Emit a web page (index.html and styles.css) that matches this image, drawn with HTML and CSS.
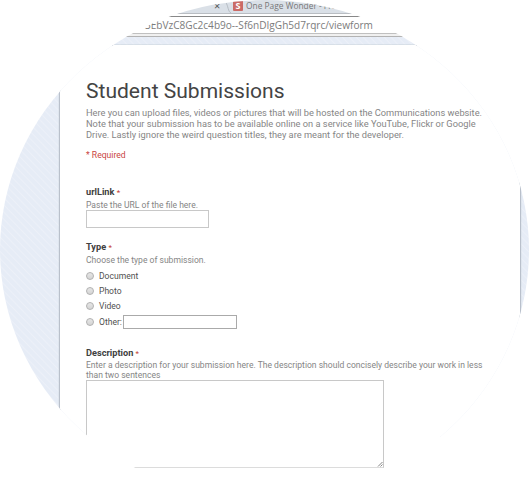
FILE: index.html
```html
<!DOCTYPE html>
<html lang="en">
<head>
<meta charset="utf-8">
<title>Student Submissions</title>
<link rel="stylesheet" href="styles.css">
</head>
<body>
<div class="window">
  <div class="tabs">
    <span class="close">×</span>
    <svg class="edge" width="7" height="13" viewBox="0 0 7 13"><path d="M0 3C2 5 2 12 5 13" fill="none" stroke="#b5bbc2"/></svg>
    <span class="favicon">S</span>
    <span class="tab-title">One Page Wonder - Free</span>
  </div>
  <div class="address"><span class="url">3EbVzC8Gc2c4b9o--Sf6nDIgGh5d7rqrc/viewform</span></div>
  <div class="toolbar-edge"></div>
  <main class="page">
    <form class="card">
      <h1>Student Submissions</h1>
      <p class="intro"><span>Here you can upload files, videos or pictures that will be hosted on the Communications website.</span><span>Note that your submission has to be available online on a service like YouTube, Flickr or Google</span><span>Drive. Lastly ignore the weird question titles, they are meant for the developer.</span></p>
      <p class="required">* Required</p>
      <section class="question url-question">
        <h2>urlLink <b>*</b></h2>
        <p class="help">Paste the URL of the file here.</p>
        <input class="url-input" type="text" aria-label="urlLink">
      </section>
      <section class="question type-question">
        <h2>Type <b>*</b></h2>
        <p class="help">Choose the type of submission.</p>
        <div class="options">
          <label><input type="radio" name="type"><span>Document</span></label>
          <label><input type="radio" name="type"><span>Photo</span></label>
          <label><input type="radio" name="type"><span>Video</span></label>
          <label class="other"><input type="radio" name="type"><span>Other:</span><input class="other-input" type="text" aria-label="Other type"></label>
        </div>
      </section>
      <section class="question description-question">
        <h2>Description <b>*</b></h2>
        <p class="help"><span>Enter a description for your submission here. The description should concisely describe your work in less</span><span>than two sentences</span></p>
        <div class="textarea-box">
          <textarea aria-label="Description"></textarea>
          <svg class="grip" width="6" height="6" viewBox="0 0 6 6"><path d="M1 5.5L5.5 1M3.5 5.5L5.5 3.5" fill="none" stroke="#666" stroke-width=".8"/></svg>
        </div>
      </section>
    </form>
  </main>
</div>
</body>
</html>
```
FILE: styles.css
```css
* { box-sizing: border-box; }
body { margin: 0; background: #fff; }
h1, h2, p { margin: 0; }

.window {
  width: 529px;
  height: 500px;
  display: flex;
  flex-direction: column;
  overflow: hidden;
  clip-path: ellipse(264.5px 250px at 264.5px 250px);
  background: #fff;
  font-family: Roboto, sans-serif;
}

.tabs {
  flex: none;
  height: 14px;
  display: flex;
  padding-left: 214px;
  background: #dae0e7;
  border-bottom: 1px solid #b9bdc2;
  white-space: nowrap;
}
.close { width: 12px; font: 11px/12px "Open Sans", sans-serif; color: #555; }
.edge { flex: none; }
.favicon {
  width: 10px;
  height: 11px;
  border-radius: 1px;
  background: #cb6b66;
  color: #fff;
  font: bold 9px/11px "Open Sans", sans-serif;
  text-align: center;
}
.tab-title { margin-left: 3px; font: 8.4px/11px "Open Sans", sans-serif; color: #777; }

.address {
  flex: none;
  height: 18px;
  margin-top: 2px;
  padding-left: 145px;
  border-top: 1px solid #888;
  border-bottom: 1px solid #c0c0c0;
  white-space: nowrap;
}
.url { display: block; font: 10.08px/17px "Open Sans", sans-serif; color: #7c7c7c; }
.toolbar-edge { flex: none; height: 3px; background: #f0f0f0; border-bottom: 1px solid #b3b3b3; }

.page {
  flex: 1;
  padding: 8px 9px 0 60px;
  background: repeating-linear-gradient(46deg, #e6ecf6 0 3px, #ecf0f8 4px, #e6ecf6 5px);
}
.card {
  height: 456px;
  padding: 33px 0 0 26px;
  background: #fff;
  box-shadow: -1px 0 1px #b9c0cb, 1px 0 1px #b9c0cb;
}
h1 { font-size: 21.05px; line-height: 26px; font-weight: 400; color: #444; }
.intro { margin-top: 3px; font-size: 9.27px; line-height: 11.2px; color: #858585; }
.intro span, .help span { display: block; white-space: nowrap; }
.required { margin-top: 9.4px; font-size: 8.6px; line-height: 10px; color: #c9453f; }
.question { display: flex; flex-direction: column; align-items: flex-start; }
h2 { font-size: 9.2px; line-height: 12px; font-weight: 700; color: #404040; }
h2 b { font-size: 8px; font-weight: 400; color: #c43b2f; }
.help { font-size: 8.56px; line-height: 10px; color: #858585; }
.url-question { margin-top: 25.6px; }
.url-question .help { margin-top: 1px; }
.type-question .help { margin-top: 1px; }
input[type="text"], textarea {
  display: block;
  margin: 0;
  padding: 0;
  border: 1px solid #c8c8c8;
  border-radius: 0;
  background: #fff;
  outline: 0;
}
.url-input { width: 123px; height: 18px; }
.type-question { margin-top: 13px; }
.options { margin-top: 4px; }
.options label { height: 15px; display: flex; align-items: center; font-size: 8.56px; color: #505050; }
.options label.other { height: 16px; }
input[type="radio"] {
  appearance: none;
  width: 8px;
  height: 8px;
  margin: 0 5px 0 0;
  border: 1px solid #b0b0b0;
  border-radius: 50%;
  background: linear-gradient(#e6e6e6, #d4d4d4);
}
.options .other-input { width: 114px; height: 14px; margin-left: 1px; border-color: #aaa; }
.description-question { margin-top: 17px; }
.textarea-box { position: relative; }
textarea { width: 298px; height: 88px; resize: none; border-bottom-color: #dcdcdc; }
.grip { position: absolute; right: 1px; bottom: 1px; }

.page { background-size: 100% 400px; background-repeat: no-repeat; }
```
